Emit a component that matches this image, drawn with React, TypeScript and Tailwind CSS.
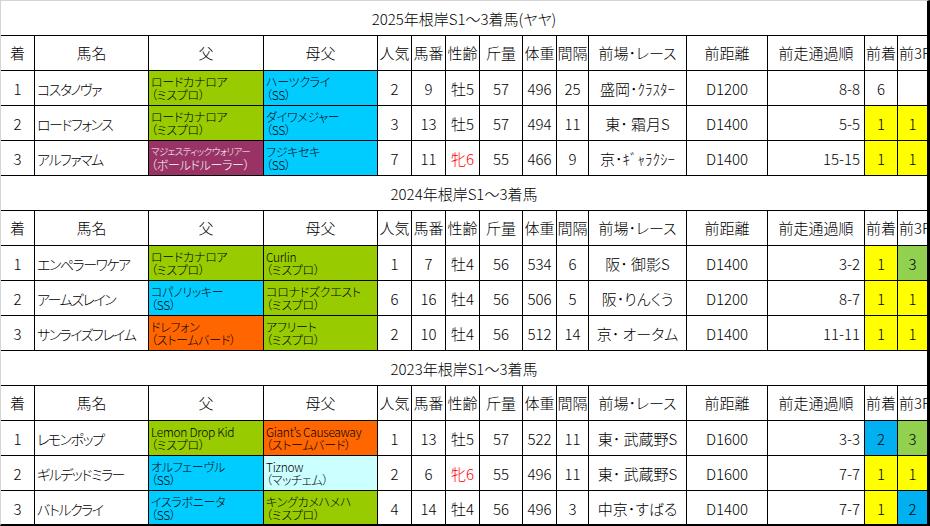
import React from "react";

type Ped = { l1: string; l2: string; bg: string; small?: boolean; white?: boolean };

type Horse = {
  pos: number;
  name: string;
  sire: Ped;
  dam: Ped;
  pop: number;
  num: number;
  sex: string;
  kin: number;
  wt: number;
  gap: number;
  race: string;
  dist: string;
  pass: string;
  prev: string;
  prevBg?: string;
  f3: string;
  f3Bg?: string;
};

const GREEN = "bg-[#99cc00]";
const CYAN = "bg-[#00ccff]";
const ORANGE = "bg-[#ff6600]";
const YELLOW = "bg-[#ffff00]";
const GREEN2 = "bg-[#92d050]";
const BLUE2 = "bg-[#00b0f0]";

const sections: { title: string; rows: Horse[] }[] = [
  {
    title: "2025年根岸S1～3着馬(ヤヤ)",
    rows: [
      {
        pos: 1, name: "コスタノヴァ",
        sire: { l1: "ロードカナロア", l2: "（ミスプロ）", bg: GREEN },
        dam: { l1: "ハーツクライ", l2: "（SS）", bg: CYAN },
        pop: 2, num: 9, sex: "牡5", kin: 57, wt: 496, gap: 25,
        race: "盛岡･ｸﾗｽﾀｰ", dist: "D1200", pass: "8-8", prev: "6", f3: "",
      },
      {
        pos: 2, name: "ロードフォンス",
        sire: { l1: "ロードカナロア", l2: "（ミスプロ）", bg: GREEN },
        dam: { l1: "ダイワメジャー", l2: "（SS）", bg: CYAN },
        pop: 3, num: 13, sex: "牡5", kin: 57, wt: 494, gap: 11,
        race: "東･ 霜月S", dist: "D1400", pass: "5-5", prev: "1", prevBg: YELLOW, f3: "1", f3Bg: YELLOW,
      },
      {
        pos: 3, name: "アルファマム",
        sire: { l1: "マジェスティックウォリアー", l2: "（ボールドルーラー）", bg: "bg-[#993366]", small: true, white: true },
        dam: { l1: "フジキセキ", l2: "（SS）", bg: CYAN },
        pop: 7, num: 11, sex: "牝6", kin: 55, wt: 466, gap: 9,
        race: "京･ｷﾞｬﾗｸｼｰ", dist: "D1400", pass: "15-15", prev: "1", prevBg: YELLOW, f3: "1", f3Bg: YELLOW,
      },
    ],
  },
  {
    title: "2024年根岸S1～3着馬",
    rows: [
      {
        pos: 1, name: "エンペラーワケア",
        sire: { l1: "ロードカナロア", l2: "（ミスプロ）", bg: GREEN },
        dam: { l1: "Curlin", l2: "（ミスプロ）", bg: GREEN },
        pop: 1, num: 7, sex: "牡4", kin: 56, wt: 534, gap: 6,
        race: "阪･ 御影S", dist: "D1400", pass: "3-2", prev: "1", prevBg: YELLOW, f3: "3", f3Bg: GREEN2,
      },
      {
        pos: 2, name: "アームズレイン",
        sire: { l1: "コパノリッキー", l2: "（SS）", bg: CYAN },
        dam: { l1: "コロナドズクエスト", l2: "（ミスプロ）", bg: GREEN },
        pop: 6, num: 16, sex: "牡4", kin: 56, wt: 506, gap: 5,
        race: "阪･りんくう", dist: "D1200", pass: "8-7", prev: "1", prevBg: YELLOW, f3: "1", f3Bg: YELLOW,
      },
      {
        pos: 3, name: "サンライズフレイム",
        sire: { l1: "ドレフォン", l2: "（ストームバード）", bg: ORANGE },
        dam: { l1: "アフリート", l2: "（ミスプロ）", bg: GREEN },
        pop: 2, num: 10, sex: "牡4", kin: 56, wt: 512, gap: 14,
        race: "京･ オータム", dist: "D1400", pass: "11-11", prev: "1", prevBg: YELLOW, f3: "1", f3Bg: YELLOW,
      },
    ],
  },
  {
    title: "2023年根岸S1～3着馬",
    rows: [
      {
        pos: 1, name: "レモンポップ",
        sire: { l1: "Lemon Drop Kid", l2: "（ミスプロ）", bg: GREEN },
        dam: { l1: "Giant’s Causeaway", l2: "（ストームバード）", bg: ORANGE },
        pop: 1, num: 13, sex: "牡5", kin: 57, wt: 522, gap: 11,
        race: "東･ 武蔵野S", dist: "D1600", pass: "3-3", prev: "2", prevBg: BLUE2, f3: "3", f3Bg: GREEN2,
      },
      {
        pos: 2, name: "ギルデッドミラー",
        sire: { l1: "オルフェーヴル", l2: "（SS）", bg: CYAN },
        dam: { l1: "Tiznow", l2: "（マッチェム）", bg: "bg-[#ccffff]" },
        pop: 2, num: 6, sex: "牝6", kin: 55, wt: 496, gap: 11,
        race: "東･ 武蔵野S", dist: "D1600", pass: "7-7", prev: "1", prevBg: YELLOW, f3: "1", f3Bg: YELLOW,
      },
      {
        pos: 3, name: "バトルクライ",
        sire: { l1: "イスラボニータ", l2: "（SS）", bg: CYAN },
        dam: { l1: "キングカメハメハ", l2: "（ミスプロ）", bg: GREEN },
        pop: 4, num: 14, sex: "牡4", kin: 56, wt: 496, gap: 3,
        race: "中京･すばる", dist: "D1400", pass: "7-7", prev: "1", prevBg: YELLOW, f3: "2", f3Bg: BLUE2,
      },
    ],
  },
];

const headers = ["着", "馬名", "父", "母父", "人気", "馬番", "性齢", "斤量", "体重", "間隔", "前場･レース", "前距離", "前走通過順", "前着", "前3F"];

function Cell({ children, className = "" }: { children?: React.ReactNode; className?: string }) {
  return (
    <div className={"h-[35px] border-b border-r border-black flex items-center overflow-hidden whitespace-nowrap " + className}>
      {children}
    </div>
  );
}

// two-line pedigree cell (sire / damsire + line)
function PedCell({ p }: { p: Ped }) {
  return (
    <Cell className={"flex-col !items-start justify-center pl-[2px] text-[12px] leading-[13px] tracking-[-0.3px] " + p.bg + (p.white ? " text-white" : "")}>
      <span className={p.small ? "text-[9.5px] tracking-[-0.6px]" : ""}>{p.l1}</span>
      <span>{p.l2}</span>
    </Cell>
  );
}

export default function App() {
  return (
    <div
      className="w-[930px] h-[526px] overflow-hidden bg-white text-black font-light border-t border-l border-t-[#d4d4d4] border-l-[#d4d4d4] border-r-[3px] border-b-2 border-r-black border-b-black text-[15px] [font-feature-settings:'palt']"
      style={{ fontFamily: '"Noto Sans CJK JP", "Noto Sans", sans-serif' }}
    >
      <div className="grid grid-cols-[34px_114px_115px_114px_34px_34px_34px_43px_34px_32px_98px_81px_97px_33px_29px]">
        {sections.map((s) => (
          <React.Fragment key={s.title}>
            <div className="col-span-15 h-[35px] border-b border-black flex items-center justify-center pt-[2px]">
              {s.title}
            </div>
            {headers.map((h, i) => (
              <Cell key={h} className={i === 14 ? "border-r-0 pl-[1px] pt-[1px]" : "justify-center pt-[1px]"}>
                {h}
              </Cell>
            ))}
            {s.rows.map((r) => (
              <React.Fragment key={r.name}>
                <Cell className="justify-center pt-[3px]">{r.pos}</Cell>
                <Cell className="pl-[2px] pt-[3px] text-[14px] tracking-[-1.5px]">{r.name}</Cell>
                <PedCell p={r.sire} />
                <PedCell p={r.dam} />
                <Cell className="justify-center pt-[3px]">{r.pop}</Cell>
                <Cell className="justify-center pt-[3px]">{r.num}</Cell>
                <Cell className={"justify-center pt-[3px]" + (r.sex.startsWith("牝") ? " text-[#ff0000]" : "")}>{r.sex}</Cell>
                <Cell className="justify-center pt-[3px]">{r.kin}</Cell>
                <Cell className="justify-center pt-[3px]">{r.wt}</Cell>
                <Cell className="justify-center pt-[3px]">{r.gap}</Cell>
                <Cell className="justify-center pt-[3px]">{r.race}</Cell>
                <Cell className="justify-center pt-[3px]">{r.dist}</Cell>
                <Cell className="justify-end pr-[4px] pt-[3px]">{r.pass}</Cell>
                <Cell className={"justify-center pt-[3px] " + (r.prevBg ?? "")}>{r.prev}</Cell>
                <Cell className={"justify-center border-r-0 pt-[3px] " + (r.f3Bg ?? "")}>{r.f3}</Cell>
              </React.Fragment>
            ))}
          </React.Fragment>
        ))}
      </div>
    </div>
  );
}
